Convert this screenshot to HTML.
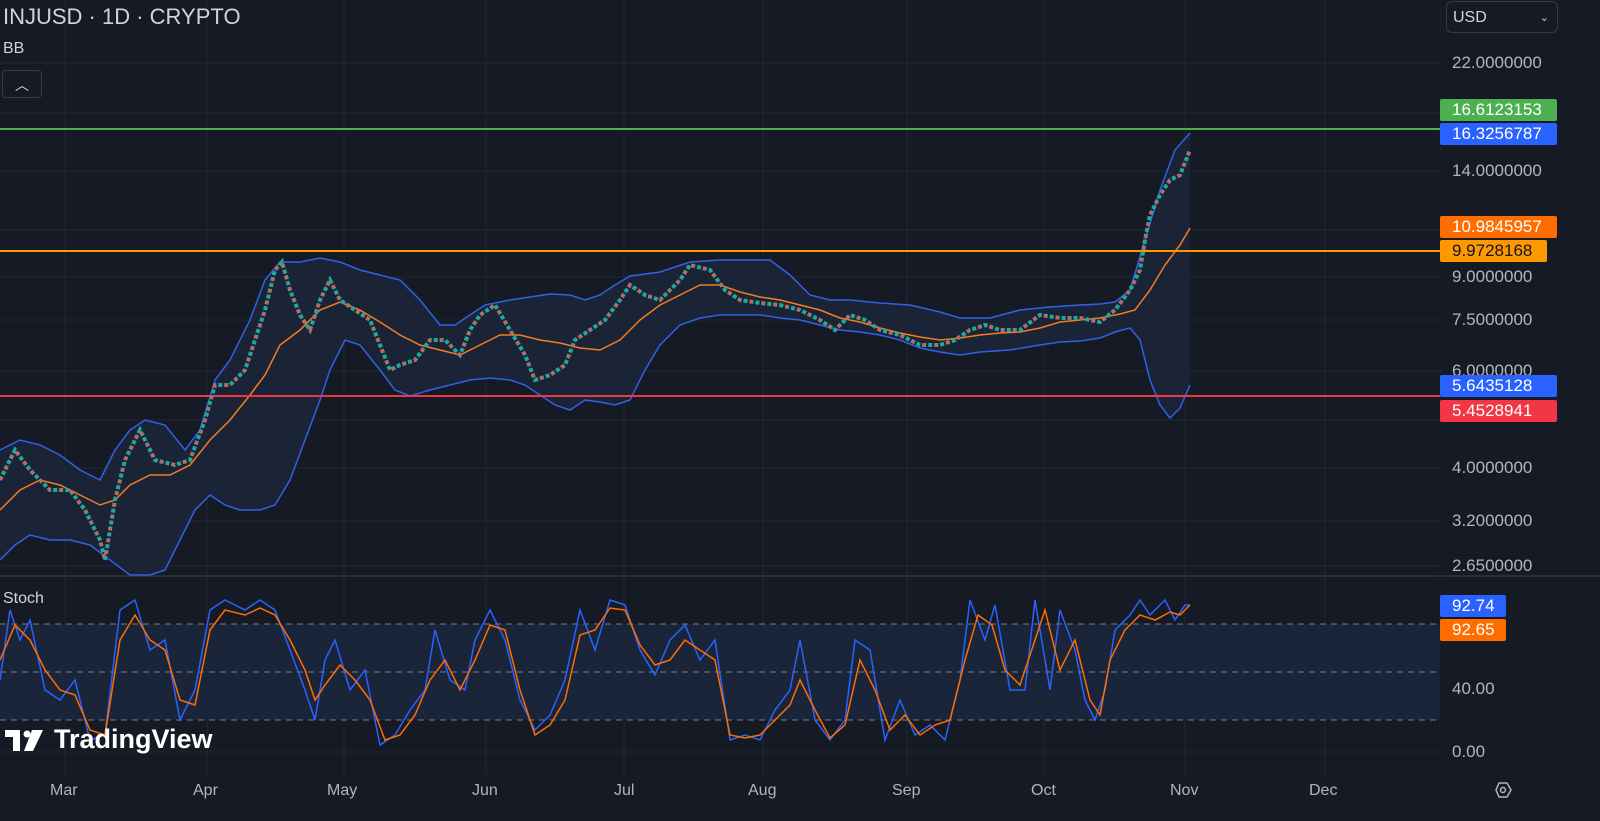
<!DOCTYPE html>
<html><head><meta charset="utf-8"><style>
body{margin:0;background:#161a25;width:1600px;height:821px;overflow:hidden;font-family:"Liberation Sans",sans-serif;}
.lbl{position:absolute;color:#fff;font-size:17px;height:22px;line-height:22px;padding-left:12px;border-radius:2px;box-sizing:border-box;}
.ax{position:absolute;color:#b2b5be;font-size:17px;left:1452px;}
.bx{position:absolute;color:#b2b5be;font-size:16px;top:782px;}
</style></head><body>
<svg width="1600" height="821" style="position:absolute;left:0;top:0">
<g stroke="#232734" stroke-width="1">
<line x1="0" y1="63" x2="1440" y2="63"/><line x1="0" y1="113" x2="1440" y2="113"/><line x1="0" y1="171" x2="1440" y2="171"/><line x1="0" y1="230" x2="1440" y2="230"/><line x1="0" y1="277" x2="1440" y2="277"/><line x1="0" y1="320" x2="1440" y2="320"/><line x1="0" y1="371" x2="1440" y2="371"/><line x1="0" y1="420" x2="1440" y2="420"/><line x1="0" y1="468" x2="1440" y2="468"/><line x1="0" y1="521" x2="1440" y2="521"/><line x1="0" y1="566" x2="1440" y2="566"/>
<line x1="0" y1="689" x2="1440" y2="689"/><line x1="0" y1="752" x2="1440" y2="752"/>
<line x1="65" y1="0" x2="65" y2="775"/><line x1="207" y1="0" x2="207" y2="775"/><line x1="344" y1="0" x2="344" y2="775"/><line x1="486" y1="0" x2="486" y2="775"/><line x1="624" y1="0" x2="624" y2="775"/><line x1="763" y1="0" x2="763" y2="775"/><line x1="907" y1="0" x2="907" y2="775"/><line x1="1044" y1="0" x2="1044" y2="775"/><line x1="1185" y1="0" x2="1185" y2="775"/><line x1="1325" y1="0" x2="1325" y2="775"/>
</g>
<line x1="0" y1="576" x2="1600" y2="576" stroke="#2a2e39" stroke-width="2"/>
<line x1="1440" y1="0" x2="1440" y2="821" stroke="#1f2330"/>
<!-- band fill -->
<polygon fill="#1b2436" points="0,450 20,440 40,445 60,455 80,470 100,480 115,450 130,430 145,420 165,425 185,450 200,430 215,380 230,360 250,320 265,280 280,262 300,262 320,258 340,262 360,270 380,275 400,280 420,300 440,325 455,325 470,315 485,305 510,300 530,297 550,294 570,295 585,300 600,295 615,285 630,276 660,272 690,262 720,260 770,260 790,275 810,295 830,300 850,300 880,303 910,305 940,312 960,318 990,318 1020,310 1050,307 1080,305 1100,304 1115,302 1130,290 1145,240 1160,190 1175,150 1190,133 1190,385 1180,408 1170,418 1160,405 1150,380 1140,340 1130,328 1115,332 1100,338 1080,341 1060,342 1040,345 1010,350 980,352 960,355 940,352 920,348 900,340 880,335 860,332 840,330 820,325 800,320 780,318 760,315 740,315 720,315 700,318 680,325 660,345 645,370 630,400 615,405 600,402 585,400 570,410 555,405 540,395 525,385 510,380 490,378 470,380 450,385 430,390 410,396 395,390 380,370 360,345 345,340 330,370 320,400 305,440 290,480 275,505 260,510 240,510 225,505 210,495 195,510 180,540 165,570 150,575 130,575 110,560 90,545 70,540 50,540 30,535 15,545 0,560"/>
<!-- upper band -->
<polyline fill="none" stroke="#2f62e6" stroke-width="1.5" points="0,450 20,440 40,445 60,455 80,470 100,480 115,450 130,430 145,420 165,425 185,450 200,430 215,380 230,360 250,320 265,280 280,262 300,262 320,258 340,262 360,270 380,275 400,280 420,300 440,325 455,325 470,315 485,305 510,300 530,297 550,294 570,295 585,300 600,295 615,285 630,276 660,272 690,262 720,260 770,260 790,275 810,295 830,300 850,300 880,303 910,305 940,312 960,318 990,318 1020,310 1050,307 1080,305 1100,304 1115,302 1130,290 1145,240 1160,190 1175,150 1190,133"/>
<polyline fill="none" stroke="#2f62e6" stroke-width="1.5" points="1190,385 1180,408 1170,418 1160,405 1150,380 1140,340 1130,328 1115,332 1100,338 1080,341 1060,342 1040,345 1010,350 980,352 960,355 940,352 920,348 900,340 880,335 860,332 840,330 820,325 800,320 780,318 760,315 740,315 720,315 700,318 680,325 660,345 645,370 630,400 615,405 600,402 585,400 570,410 555,405 540,395 525,385 510,380 490,378 470,380 450,385 430,390 410,396 395,390 380,370 360,345 345,340 330,370 320,400 305,440 290,480 275,505 260,510 240,510 225,505 210,495 195,510 180,540 165,570 150,575 130,575 110,560 90,545 70,540 50,540 30,535 15,545 0,560"/>
<!-- mid -->
<polyline fill="none" stroke="#f57c1f" stroke-width="1.5" points="0,510 20,490 40,480 60,485 80,495 100,505 115,500 130,485 150,475 170,475 190,465 210,440 230,420 250,395 265,375 280,345 300,330 320,310 340,302 360,310 380,322 400,335 420,345 440,350 460,355 480,345 500,335 520,335 540,340 560,343 580,348 600,350 620,340 640,320 660,305 680,295 700,285 720,285 740,292 760,297 780,300 800,305 820,310 840,318 860,322 880,328 900,333 920,337 940,340 960,338 980,335 1000,333 1020,332 1040,328 1060,322 1080,320 1100,318 1120,314 1135,310 1150,290 1165,265 1180,245 1190,228"/>
<!-- horizontal lines -->
<line x1="0" y1="129" x2="1440" y2="129" stroke="#4caf50" stroke-width="2"/>
<line x1="0" y1="251" x2="1440" y2="251" stroke="#ff9800" stroke-width="2"/>
<line x1="0" y1="396" x2="1440" y2="396" stroke="#f23645" stroke-width="2"/>
<!-- price -->
<polyline fill="none" stroke="#26a69a" stroke-width="4" stroke-dasharray="4 2" points="0,480 15,450 30,470 50,490 70,490 85,510 100,540 105,560 115,500 125,460 140,430 155,460 175,465 190,460 205,420 215,385 230,385 245,370 255,340 265,310 275,270 282,262 290,290 300,315 310,330 320,300 330,280 340,300 355,310 370,320 380,345 390,370 400,365 415,360 430,340 445,340 460,355 470,330 480,315 495,305 510,330 525,355 535,380 550,375 565,365 575,340 590,330 605,320 620,300 630,285 645,295 660,300 680,280 690,265 710,270 725,290 740,300 760,303 780,305 800,310 820,320 835,330 850,315 865,320 880,330 900,335 920,345 940,345 955,340 970,330 985,325 1000,330 1020,330 1040,315 1060,318 1080,318 1100,322 1115,310 1130,290 1140,270 1145,240 1150,215 1160,195 1170,180 1180,175 1190,150"/>
<polyline fill="none" stroke="#ef5350" stroke-width="3" stroke-dasharray="3 9" points="0,480 15,450 30,470 50,490 70,490 85,510 100,540 105,560 115,500 125,460 140,430 155,460 175,465 190,460 205,420 215,385 230,385 245,370 255,340 265,310 275,270 282,262 290,290 300,315 310,330 320,300 330,280 340,300 355,310 370,320 380,345 390,370 400,365 415,360 430,340 445,340 460,355 470,330 480,315 495,305 510,330 525,355 535,380 550,375 565,365 575,340 590,330 605,320 620,300 630,285 645,295 660,300 680,280 690,265 710,270 725,290 740,300 760,303 780,305 800,310 820,320 835,330 850,315 865,320 880,330 900,335 920,345 940,345 955,340 970,330 985,325 1000,330 1020,330 1040,315 1060,318 1080,318 1100,322 1115,310 1130,290 1140,270 1145,240 1150,215 1160,195 1170,180 1180,175 1190,150"/>
<!-- stoch pane -->
<rect x="0" y="624" width="1440" height="96" fill="#1a2539"/>
<g stroke="#787b86" stroke-dasharray="6 5" stroke-width="1"><line x1="0" y1="624" x2="1440" y2="624"/><line x1="0" y1="672" x2="1440" y2="672"/><line x1="0" y1="720" x2="1440" y2="720"/></g>
<polyline fill="none" stroke="#2962ff" stroke-width="1.5" points="0,680 10,610 20,640 30,620 45,690 60,700 75,680 90,740 105,735 120,610 135,600 150,650 165,640 180,720 195,690 210,610 225,600 245,610 260,600 275,610 290,650 305,690 315,720 325,660 335,640 350,690 365,670 380,745 395,735 410,710 425,690 435,630 450,680 465,690 475,640 490,610 505,640 520,700 535,730 550,715 565,680 580,610 595,650 610,600 625,605 640,650 655,675 670,640 685,625 700,660 715,640 730,740 745,735 760,740 775,710 790,690 800,640 815,720 830,740 845,720 855,640 870,650 885,740 900,700 915,735 930,725 945,740 960,680 970,600 985,640 995,605 1010,690 1025,690 1035,600 1050,690 1060,610 1075,650 1085,700 1095,720 1105,690 1115,630 1130,615 1140,600 1150,615 1165,600 1175,620 1185,605 1190,605"/>
<polyline fill="none" stroke="#ff6d00" stroke-width="1.5" points="0,660 15,625 30,640 45,670 60,690 75,695 90,730 105,735 120,640 135,615 150,640 165,650 180,700 195,705 210,630 225,610 245,615 260,608 275,615 290,640 305,670 315,700 325,685 340,665 355,680 370,700 385,740 400,735 415,715 430,680 445,660 460,690 475,660 490,625 505,630 520,690 535,735 550,725 565,700 580,635 595,630 610,608 625,610 640,645 655,665 670,660 685,640 700,650 715,660 730,735 745,738 760,735 775,720 790,705 800,680 815,710 830,738 845,725 860,660 875,690 890,730 905,715 920,735 935,725 950,720 965,660 978,615 992,625 1005,670 1020,685 1035,640 1045,610 1060,670 1075,640 1090,700 1100,715 1110,660 1125,630 1140,615 1155,620 1170,612 1180,615 1190,605"/>
<!-- settings icon -->
<polygon points="1496,790 1499,783 1507,783 1511,790 1507,797 1499,797" fill="none" stroke="#b2b5be" stroke-width="1.5"/>
<circle cx="1503" cy="790" r="2.5" fill="none" stroke="#b2b5be" stroke-width="1.5"/>
<!-- tv logo -->
<g fill="#fff"><path d="M5,730 h15 v21 h-7 v-14 h-8z"/><circle cx="27" cy="734" r="3.5"/><path d="M32,730 h11 l-10,21 h-9z"/></g>
</svg>
<div style="position:absolute;left:3px;top:4px;color:#d1d4dc;font-size:22px">INJUSD · 1D · CRYPTO</div>
<div style="position:absolute;left:3px;top:40px;color:#d1d4dc;font-size:16px">BB</div>
<div style="position:absolute;left:2px;top:70px;width:38px;height:26px;border:1px solid #363a45;border-radius:4px;color:#d1d4dc;text-align:center;font-size:14px;line-height:28px">︿</div>
<div style="position:absolute;left:3px;top:590px;color:#d1d4dc;font-size:16px">Stoch</div>
<div style="position:absolute;left:54px;top:724px;color:#fff;font-size:27px;font-weight:bold">TradingView</div>
<div style="position:absolute;left:1446px;top:1px;width:112px;height:32px;border:1px solid #363a45;border-radius:6px;color:#d1d4dc;font-size:16px;line-height:32px;padding-left:6px;box-sizing:border-box">USD<span style="position:absolute;right:8px;font-size:11px">⌄</span></div>
<div class="ax" style="top:53px">22.0000000</div>
<div class="ax" style="top:161px">14.0000000</div>
<div class="ax" style="top:267px">9.0000000</div>
<div class="ax" style="top:310px">7.5000000</div>
<div class="ax" style="top:361px">6.0000000</div>
<div class="ax" style="top:458px">4.0000000</div>
<div class="ax" style="top:511px">3.2000000</div>
<div class="ax" style="top:556px">2.6500000</div>
<div class="ax" style="top:679px">40.00</div>
<div class="ax" style="top:742px">0.00</div>
<div class="lbl" style="left:1440px;top:99px;width:117px;background:#4caf50">16.6123153</div>
<div class="lbl" style="left:1440px;top:123px;width:117px;background:#2962ff">16.3256787</div>
<div class="lbl" style="left:1440px;top:216px;width:117px;background:#ff6d00">10.9845957</div>
<div class="lbl" style="left:1440px;top:240px;width:107px;background:#ff9800;color:#131722">9.9728168</div>
<div class="lbl" style="left:1440px;top:375px;width:117px;background:#2962ff">5.6435128</div>
<div class="lbl" style="left:1440px;top:400px;width:117px;background:#f23645">5.4528941</div>
<div class="lbl" style="left:1440px;top:595px;width:66px;background:#2962ff">92.74</div>
<div class="lbl" style="left:1440px;top:619px;width:66px;background:#ff6d00">92.65</div>
<div class="bx" style="left:50px">Mar</div><div class="bx" style="left:193px">Apr</div><div class="bx" style="left:327px">May</div><div class="bx" style="left:472px">Jun</div><div class="bx" style="left:614px">Jul</div><div class="bx" style="left:748px">Aug</div><div class="bx" style="left:892px">Sep</div><div class="bx" style="left:1031px">Oct</div><div class="bx" style="left:1170px">Nov</div><div class="bx" style="left:1309px">Dec</div>
</body></html>
